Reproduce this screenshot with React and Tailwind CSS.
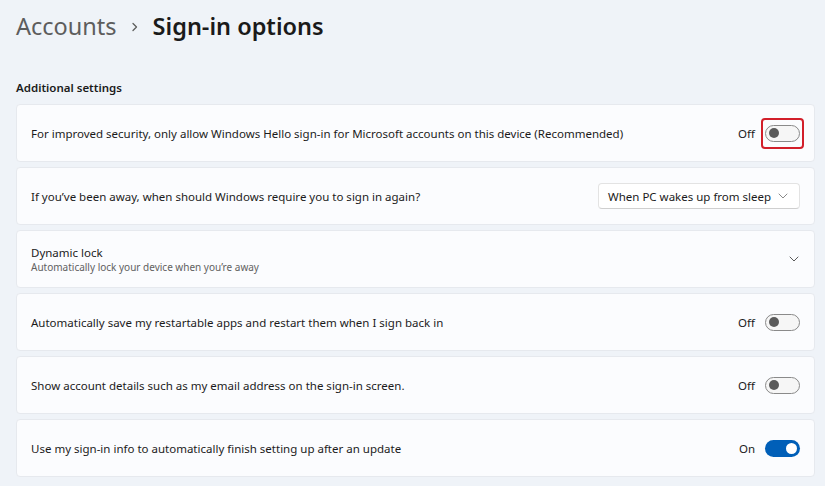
import React from "react";

function Toggle({ on }) {
  return on ? (
    <div className="w-[35px] h-[17px] rounded-full bg-[#005fb8] flex items-center justify-end pr-[3px]">
      <div className="w-[11px] h-[11px] rounded-full bg-white" />
    </div>
  ) : (
    <div className="w-[35px] h-[17px] rounded-full border border-[#8a8a8a] bg-[#f6f6f6] flex items-center pl-[3px]">
      <div className="w-[10px] h-[10px] rounded-full bg-[#5a5a5a]" />
    </div>
  );
}

function Chevron({ color = "#5a5a5a" }) {
  return (
    <svg width="10" height="6" viewBox="0 0 10 6" fill="none">
      <path d="M1 1l4 4 4-4" stroke={color} strokeWidth="1" strokeLinecap="round" strokeLinejoin="round" />
    </svg>
  );
}

function Card({ children, pr = "pr-[14px]" }) {
  return (
    <div className={"h-[58px] bg-[#fbfcfe] rounded-[4px] border border-[#e6e9ee] flex items-center pl-[14px] " + pr}>
      {children}
    </div>
  );
}

function ToggleRow({ label, on, highlight }) {
  return (
    <Card>
      <div className="flex-1 text-[11.5px] text-[#1b1b1b]">{label}</div>
      <div className="flex items-center">
        <span className="text-[11.5px] text-[#1b1b1b] mr-[10px]">{on ? "On" : "Off"}</span>
        {highlight ? (
          <div className="border-2 border-[#d21f2a] rounded-[4px] px-[2px] py-[5px] -mx-[4px] -my-[7px]">
            <Toggle on={on} />
          </div>
        ) : (
          <Toggle on={on} />
        )}
      </div>
    </Card>
  );
}

export default function App() {
  return (
    <div
      className="w-[825px] h-[486px] bg-[#eff3f8] overflow-hidden pl-[16px] pr-[10px]"
      style={{ fontFamily: '"Noto Sans", "Open Sans", sans-serif' }}
    >
      <div className="flex items-center h-[52px] pt-[1px]">
        <span className="text-[23.5px] text-[#5d5d5d]">Accounts</span>
        <span className="ml-[14px] mr-[15px] flex items-center">
          <svg width="7" height="10" viewBox="0 0 7 10" fill="none">
            <path d="M2 1.5l3.5 3.5-3.5 3.5" stroke="#5d5d5d" strokeWidth="1.3" strokeLinecap="round" strokeLinejoin="round" />
          </svg>
        </span>
        <span className="text-[23.5px] font-semibold text-[#1a1a1a]">Sign-in options</span>
      </div>
      <div className="mt-[27px] mb-[8px] text-[11.5px] font-semibold text-[#1b1b1b]">Additional settings</div>
      <div className="flex flex-col gap-[5px]">
        <ToggleRow
          label="For improved security, only allow Windows Hello sign-in for Microsoft accounts on this device (Recommended)"
          on={false}
          highlight
        />
        <Card pr="pr-[14px]">
          <div className="flex-1 text-[11.5px] text-[#1b1b1b]">If you’ve been away, when should Windows require you to sign in again?</div>
          <div className="w-[202px] h-[26px] bg-white border border-[#e3e3e3] border-b-[#cfcfcf] rounded-[4px] flex items-center justify-between pl-[9px] pr-[11px] whitespace-nowrap">
            <span className="text-[11.5px] text-[#1b1b1b]">When PC wakes up from sleep</span>
            <Chevron color="#8a8a8a" />
          </div>
        </Card>
        <Card pr="pr-[15px]">
          <div className="flex-1 flex flex-col">
            <span className="text-[11.5px] text-[#1b1b1b] leading-[16px]">Dynamic lock</span>
            <span className="text-[10px] text-[#616161] leading-[13px]">Automatically lock your device when you’re away</span>
          </div>
          <Chevron />
        </Card>
        <ToggleRow label="Automatically save my restartable apps and restart them when I sign back in" on={false} />
        <ToggleRow label="Show account details such as my email address on the sign-in screen." on={false} />
        <ToggleRow label="Use my sign-in info to automatically finish setting up after an update" on />
      </div>
    </div>
  );
}
